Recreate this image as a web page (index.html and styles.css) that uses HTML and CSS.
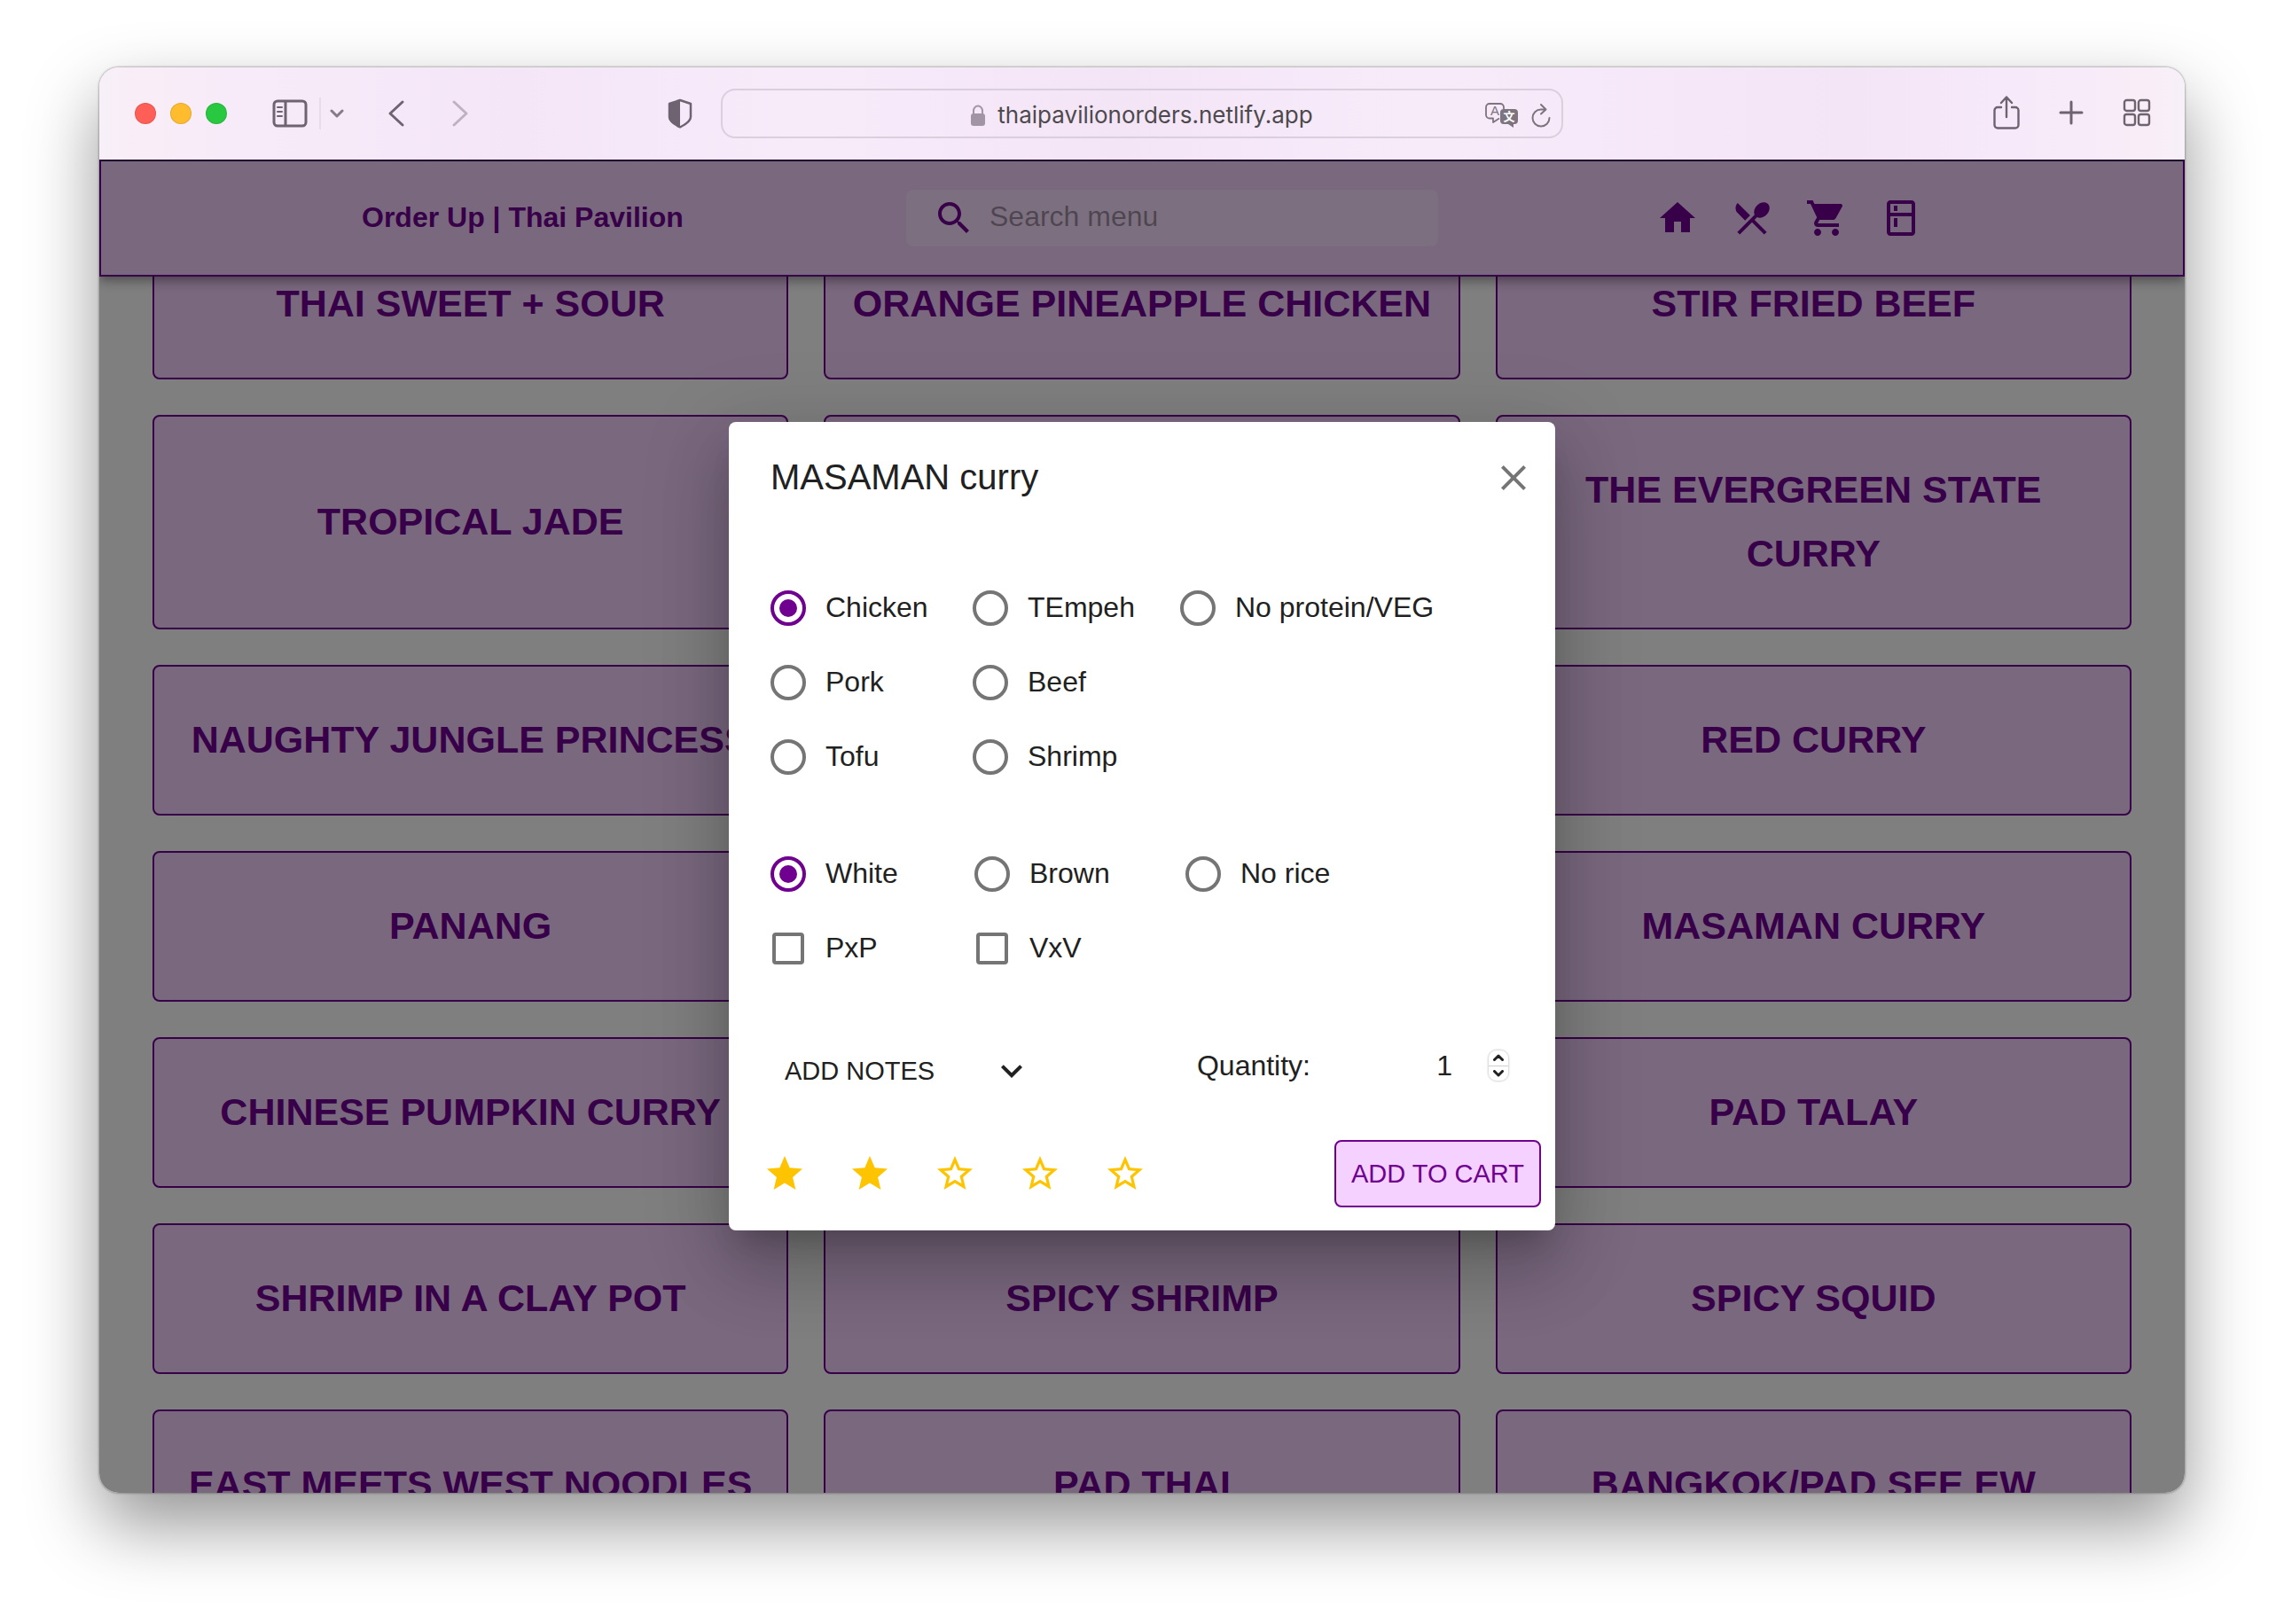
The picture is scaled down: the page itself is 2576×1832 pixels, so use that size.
FILE: index.html
```html
<!DOCTYPE html>
<html lang="en">
<head>
<meta charset="utf-8">
<meta name="viewport" content="width=device-width, initial-scale=1">
<title>Order Up | Thai Pavilion</title>
<link rel="stylesheet" href="styles.css">
</head>
<body>
<div class="window">
  <div class="toolbar">
    <div class="toolbar-left">
      <div class="lights"><span class="light light-red"></span><span class="light light-yellow"></span><span class="light light-green"></span></div>
      <button class="tool sidebar-tool" aria-label="Sidebar">
        <svg width="40" height="32" viewBox="0 0 40 32" fill="none" stroke="currentColor" stroke-width="3"><rect x="2" y="2" width="36" height="28" rx="4"/><path d="M15 2v28"/><path stroke-width="2" stroke-linecap="round" d="M6 9h5M6 14h5M6 19h5"/></svg>
      </button>
      <span class="divider"></span>
      <button class="tool tabs-tool" aria-label="Tab groups">
        <svg width="16" height="12" viewBox="0 0 16 12" fill="none" stroke="#857a88" stroke-width="3" stroke-linecap="round" stroke-linejoin="round"><path d="M2 3l6 6 6-6"/></svg>
      </button>
      <button class="tool back-tool" aria-label="Back">
        <svg width="20" height="32" viewBox="0 0 20 32" fill="none" stroke="currentColor" stroke-width="3" stroke-linecap="round" stroke-linejoin="round"><path d="M17 3L3 16l14 13"/></svg>
      </button>
      <button class="tool forward-tool" aria-label="Forward">
        <svg width="20" height="32" viewBox="0 0 20 32" fill="none" stroke="currentColor" stroke-width="3" stroke-linecap="round" stroke-linejoin="round"><path d="M3 3l14 13L3 29"/></svg>
      </button>
      <button class="tool shield-tool" aria-label="Privacy report">
        <svg width="28" height="34" viewBox="0 0 28 34"><path d="M14 2L26 6v15c0 5-7 9-12 11.500C9 30 2 26 2 21V6z" fill="none" stroke="currentColor" stroke-width="2.500" stroke-linejoin="round"/><path d="M14 1v32C9 30 1 26 1 21V6z" fill="currentColor"/></svg>
      </button>
    </div>
    <div class="address">
      <div class="address-site">
        <svg width="16" height="24" viewBox="0 0 16 24"><rect y="10" width="16" height="14" rx="3" fill="#a294a5"/><path d="M3 11V7a5 5.500 0 0 1 10 0v4" fill="none" stroke="#a294a5" stroke-width="2"/></svg>
        <span>thaipavilionorders.netlify.app</span>
      </div>
      <div class="address-tools">
        <button class="tool" aria-label="Translate">
          <svg width="38" height="28" viewBox="0 0 38 28"><path d="M16 17.500L9 22v-4.500H5a4 4 0 0 1-4-4V5a4 4 0 0 1 4-4h12a4 4 0 0 1 4 4v2" fill="none" stroke="#7d747f" stroke-width="1.800" stroke-linejoin="round"/><text x="11" y="14" text-anchor="middle" class="glyph-latin">A</text><path d="M21 7h12a4 4 0 0 1 4 4v9a4 4 0 0 1-4 4h-1v4l-6-4h-5a4 4 0 0 1-4-4v-9a4 4 0 0 1 4-4z" fill="#7d747f"/><text x="27" y="20" text-anchor="middle" class="glyph-han">文</text></svg>
        </button>
        <button class="tool" aria-label="Reload">
          <svg width="22" height="28" viewBox="0 0 22 28" fill="none" stroke="#7d747f" stroke-width="2" stroke-linecap="round" stroke-linejoin="round"><path d="M16 7.500H11A9.500 9.500 0 1 0 20.500 17M11 2l5.500 5.500L11 12.500"/></svg>
        </button>
      </div>
    </div>
    <div class="toolbar-right">
      <button class="tool share-tool" aria-label="Share">
        <svg width="30" height="38" viewBox="0 0 30 38" fill="none" stroke="currentColor" stroke-width="2.400" stroke-linecap="round" stroke-linejoin="round"><path d="M9 13H5a3.500 3.500 0 0 0-3.500 3.500v16.500A3.500 3.500 0 0 0 5 36.500h20a3.500 3.500 0 0 0 3.500-3.500V16.500A3.500 3.500 0 0 0 25 13h-4M15 24V2M9 8l6-6.500L21 8"/></svg>
      </button>
      <button class="tool" aria-label="New tab">
        <svg width="28" height="28" viewBox="0 0 28 28" stroke="currentColor" stroke-width="3" stroke-linecap="round"><path d="M14 2v24M2 14h24"/></svg>
      </button>
      <button class="tool" aria-label="Tab overview">
        <svg width="32" height="32" viewBox="0 0 32 32" fill="none" stroke="currentColor" stroke-width="2.400"><rect x="2" y="2" width="12" height="12" rx="2.500"/><rect x="18" y="2" width="12" height="12" rx="2.500"/><rect x="2" y="18" width="12" height="12" rx="2.500"/><rect x="18" y="18" width="12" height="12" rx="2.500"/></svg>
      </button>
    </div>
  </div>

  <div class="page">
    <header class="app-bar">
      <h1 class="brand">Order Up | Thai Pavilion</h1>
      <label class="search">
        <svg class="icon" viewBox="0 0 24 24"><path d="M15.500 14h-.79l-.28-.27C15.410 12.590 16 11.110 16 9.500 16 5.910 13.090 3 9.500 3S3 5.910 3 9.500 5.910 16 9.500 16c1.610 0 3.090-.59 4.230-1.570l.27.28v.79l5 4.990L20.490 19l-4.990-5zm-6 0C7.010 14 5 11.990 5 9.500S7.010 5 9.500 5 14 7.010 14 9.500 11.990 14 9.500 14z"/></svg>
        <input class="search-input" type="text" placeholder="Search menu" aria-label="Search menu">
      </label>
      <nav class="nav">
        <a href="#home" aria-label="Home"><svg class="icon" viewBox="0 0 24 24"><path d="M10 20v-6h4v6h5v-8h3L12 3 2 12h3v8z"/></svg></a>
        <a href="#menu" aria-label="Menu"><svg class="icon" viewBox="0 0 24 24"><path d="M8.100 13.340l2.830-2.830L3.910 3.500c-1.560 1.560-1.560 4.090 0 5.660l4.190 4.180zm6.780-1.810c1.530.71 3.680.21 5.270-1.380 1.910-1.910 2.280-4.650.81-6.120-1.460-1.460-4.200-1.100-6.120.81-1.590 1.590-2.090 3.740-1.380 5.270L3.700 19.870l1.410 1.410L12 14.410l6.880 6.880 1.410-1.410L13.410 13l1.470-1.470z"/></svg></a>
        <a href="#cart" aria-label="Cart"><svg class="icon" viewBox="0 0 24 24"><path d="M7 18c-1.100 0-1.990.9-1.990 2S5.900 22 7 22s2-.9 2-2-.9-2-2-2zM1 2v2h2l3.600 7.590-1.350 2.450c-.16.28-.25.61-.25.96 0 1.100.9 2 2 2h12v-2H7.420c-.14 0-.25-.11-.25-.25l.03-.12.9-1.630h7.450c.75 0 1.410-.41 1.750-1.030l3.580-6.490c.08-.14.12-.31.12-.48 0-.55-.45-1-1-1H5.210l-.94-2H1zm16 16c-1.100 0-1.990.9-1.990 2s.89 2 1.990 2 2-.9 2-2-.9-2-2-2z"/></svg></a>
        <a href="#kitchen" aria-label="Kitchen"><svg class="icon" viewBox="0 0 24 24"><path d="M18 2.010L6 2c-1.100 0-2 .89-2 2v16c0 1.100.9 2 2 2h12c1.100 0 2-.9 2-2V4c0-1.100-.9-1.990-2-1.990zM18 20H6v-9.020h12V20zm0-11H6V4h12v5zM8 5h2v3H8V5zm0 7h2v5H8v-5z"/></svg></a>
      </nav>
    </header>

    <main class="menu-grid">
      <button class="dish">THAI SWEET + SOUR</button>
      <button class="dish">ORANGE PINEAPPLE CHICKEN</button>
      <button class="dish">STIR FRIED BEEF</button>
      <button class="dish">TROPICAL JADE</button>
      <div class="dish"></div>
      <button class="dish">THE EVERGREEN STATE CURRY</button>
      <button class="dish">NAUGHTY JUNGLE PRINCESS</button>
      <div class="dish"></div>
      <button class="dish">RED CURRY</button>
      <button class="dish">PANANG</button>
      <div class="dish"></div>
      <button class="dish">MASAMAN CURRY</button>
      <button class="dish">CHINESE PUMPKIN CURRY</button>
      <div class="dish"></div>
      <button class="dish">PAD TALAY</button>
      <button class="dish">SHRIMP IN A CLAY POT</button>
      <button class="dish">SPICY SHRIMP</button>
      <button class="dish">SPICY SQUID</button>
      <button class="dish">EAST MEETS WEST NOODLES</button>
      <button class="dish">PAD THAI</button>
      <button class="dish">BANGKOK/PAD SEE EW</button>
    </main>

    <div class="backdrop">
      <form class="dialog" role="dialog" aria-labelledby="dialog-title">
        <div class="dialog-head">
          <h2 class="dialog-title" id="dialog-title">MASAMAN curry</h2>
          <button class="tool close" type="button" aria-label="Close"><svg class="icon" viewBox="0 0 24 24"><path d="M19 6.410L17.590 5 12 10.590 6.410 5 5 6.410 10.590 12 5 17.590 6.410 19 12 13.410 17.590 19 19 17.590 13.410 12z"/></svg></button>
        </div>

        <div class="options">
          <div class="choices protein">
            <label class="choice"><input class="radio" type="radio" name="protein" checked><span>Chicken</span></label>
            <label class="choice"><input class="radio" type="radio" name="protein"><span>TEmpeh</span></label>
            <label class="choice"><input class="radio" type="radio" name="protein"><span>No protein/VEG</span></label>
            <label class="choice first"><input class="radio" type="radio" name="protein"><span>Pork</span></label>
            <label class="choice"><input class="radio" type="radio" name="protein"><span>Beef</span></label>
            <label class="choice first"><input class="radio" type="radio" name="protein"><span>Tofu</span></label>
            <label class="choice"><input class="radio" type="radio" name="protein"><span>Shrimp</span></label>
          </div>
          <div class="choices rice">
            <label class="choice"><input class="radio" type="radio" name="rice" checked><span>White</span></label>
            <label class="choice"><input class="radio" type="radio" name="rice"><span>Brown</span></label>
            <label class="choice"><input class="radio" type="radio" name="rice"><span>No rice</span></label>
            <label class="choice first"><input class="check" type="checkbox" name="pxp"><span>PxP</span></label>
            <label class="choice"><input class="check" type="checkbox" name="vxv"><span>VxV</span></label>
          </div>
        </div>

        <div class="extras">
          <button class="notes" type="button">ADD NOTES<svg class="icon" viewBox="0 0 24 24"><path d="M16.590 8.590L12 13.170 7.410 8.590 6 10l6 6 6-6z"/></svg></button>
          <div class="quantity">
            <label for="quantity">Quantity:</label>
            <input class="quantity-input" id="quantity" type="number" value="1" min="1">
            <span class="stepper">
              <button type="button" aria-label="Increase"><svg width="12" height="8" viewBox="0 0 12 8"><path d="M1.500 6.500L6 2l4.500 4.500"/></svg></button>
              <button type="button" aria-label="Decrease"><svg width="12" height="8" viewBox="0 0 12 8"><path d="M1.500 1.500L6 6l4.500-4.500"/></svg></button>
            </span>
          </div>
        </div>

        <div class="dialog-foot">
          <div class="stars">
            <button class="tool" type="button" aria-label="1 star"><svg class="icon" viewBox="0 0 24 24"><path d="M12 17.270L18.180 21l-1.640-7.030L22 9.240l-7.190-.61L12 2 9.190 8.630 2 9.240l5.460 4.730L5.820 21z"/></svg></button>
            <button class="tool" type="button" aria-label="2 stars"><svg class="icon" viewBox="0 0 24 24"><path d="M12 17.270L18.180 21l-1.640-7.030L22 9.240l-7.190-.61L12 2 9.190 8.630 2 9.240l5.460 4.730L5.820 21z"/></svg></button>
            <button class="tool" type="button" aria-label="3 stars"><svg class="icon" viewBox="0 0 24 24"><path d="M22 9.240l-7.190-.62L12 2 9.190 8.630 2 9.240l5.460 4.730L5.820 21 12 17.270 18.180 21l-1.630-7.030L22 9.240zM12 15.400l-3.760 2.270 1-4.280-3.320-2.880 4.380-.38L12 6.100l1.710 4.040 4.380.38-3.320 2.880 1 4.280L12 15.400z"/></svg></button>
            <button class="tool" type="button" aria-label="4 stars"><svg class="icon" viewBox="0 0 24 24"><path d="M22 9.240l-7.190-.62L12 2 9.190 8.630 2 9.240l5.460 4.730L5.820 21 12 17.270 18.180 21l-1.630-7.030L22 9.240zM12 15.400l-3.760 2.270 1-4.280-3.320-2.880 4.380-.38L12 6.100l1.710 4.040 4.380.38-3.320 2.880 1 4.280L12 15.400z"/></svg></button>
            <button class="tool" type="button" aria-label="5 stars"><svg class="icon" viewBox="0 0 24 24"><path d="M22 9.240l-7.190-.62L12 2 9.190 8.630 2 9.240l5.460 4.730L5.820 21 12 17.270 18.180 21l-1.630-7.030L22 9.240zM12 15.400l-3.760 2.270 1-4.280-3.320-2.880 4.380-.38L12 6.100l1.710 4.040 4.380.38-3.320 2.880 1 4.280L12 15.400z"/></svg></button>
          </div>
          <button class="add" type="submit">ADD TO CART</button>
        </div>
      </form>
    </div>
  </div>
</div>
</body>
</html>
```
FILE: styles.css
```css
:root {
  --purple: #700090;
  --lilac: #f5d1ff;
  --ink: #212121;
  --muted: #757575;
  --chrome-icon: #6e6371;
}

* {
  box-sizing: border-box;
}

body {
  display: flex;
  height: 100vh;
  margin: 0;
  padding: 76px 112px 148px;
  background: #fff;
  color: var(--ink);
  font-family: "Liberation Sans", Arial, sans-serif;
  font-size: 32px;
  line-height: 48px;
  overflow: hidden;
}

button,
input {
  font: inherit;
  color: inherit;
}

h1,
h2 {
  margin: 0;
}

svg {
  display: block;
}

/* Browser window */

.window {
  display: flex;
  flex: 1;
  flex-direction: column;
  min-width: 0;
  border-radius: 22px;
  box-shadow: 0 0 2px 1px rgba(0, 0, 0, 0.25), 0 36px 80px rgba(0, 0, 0, 0.42);
  overflow: hidden;
}

.toolbar {
  display: grid;
  grid-template-columns: minmax(0, 701fr) minmax(0, 950fr) minmax(0, 701fr);
  flex: none;
  align-items: center;
  height: 104px;
  background: linear-gradient(90deg, #f7f0f8 0, #f9edf7 2%, #f7ebf9 6%, #f4e6f7 20%, #f7ebfa 34%, #f4e5f6 49%, #f7ebfa 63%, #f4e5f6 84%, #f7ebfa 95%, #f9edf7 98%, #f7f0f8 100%);
  color: var(--chrome-icon);
}

.tool {
  flex: none;
  padding: 0;
  border: 0;
  background: none;
}

.toolbar-left {
  display: flex;
  align-items: center;
  padding: 0 32px 0 40px;
}

.lights {
  display: flex;
  gap: 16px;
  margin-right: 51px;
}

.light {
  width: 24px;
  height: 24px;
  border: 1px solid rgba(0, 0, 0, 0.1);
  border-radius: 50%;
}

.light-red {
  background: #ff5f57;
}

.light-yellow {
  background: #febc2e;
}

.light-green {
  background: #28c840;
}

.divider {
  width: 2px;
  height: 36px;
  margin: 0 10px 0 13px;
  background: #e8dceb;
}

.back-tool {
  margin-left: 49px;
}

.forward-tool {
  margin-left: 52px;
  color: #bfb1c2;
}

.shield-tool {
  margin-left: auto;
}

.address {
  display: grid;
  grid-template-columns: 1fr auto 1fr;
  align-items: center;
  height: 56px;
  padding: 3px 12px 0;
  border: 2px solid #dacfdd;
  border-radius: 16px;
}

.address-site {
  display: flex;
  grid-column: 2;
  align-items: center;
  gap: 14px;
  color: #4c4a4d;
  font-family: Inter, sans-serif;
  font-size: 26px;
}

.address-tools {
  display: flex;
  align-items: center;
  justify-content: flex-end;
  gap: 14px;
}

.glyph-latin {
  fill: #7d747f;
  font: 15px "Liberation Sans", sans-serif;
}

.glyph-han {
  fill: #fff;
  font: bold 13px "Noto Sans CJK SC", sans-serif;
}

.toolbar-right {
  display: flex;
  align-items: center;
  justify-content: flex-end;
  gap: 44px;
  padding: 0 38px 2px 0;
}

/* Page */

.page {
  position: relative;
  flex: 1;
  min-height: 0;
  background: #fff;
  overflow: hidden;
}

.app-bar {
  position: absolute;
  inset: 0 0 auto;
  display: flex;
  align-items: center;
  justify-content: space-between;
  height: 132px;
  padding: 0 12.5%;
  border: 2px solid var(--purple);
  border-top-color: #3c0058;
  background: var(--lilac);
  box-shadow: 0 4px 8px -2px rgba(0, 0, 0, 0.2), 0 8px 10px rgba(0, 0, 0, 0.14), 0 2px 20px rgba(0, 0, 0, 0.12);
  color: var(--purple);
}

.icon {
  flex: none;
  width: 48px;
  height: 48px;
  fill: currentColor;
}

.brand {
  flex: 0 0 368px;
  padding-bottom: 2px;
  font-size: 32px;
  white-space: nowrap;
}

.search {
  display: flex;
  flex: 0 1 600px;
  align-items: center;
  gap: 16px;
  height: 64px;
  padding: 0 30px;
  border-radius: 8px;
  background: rgba(255, 255, 255, 0.3);
}

.search-input {
  flex: 1;
  min-width: 0;
  padding: 0 0 4px;
  border: 0;
  background: none;
}

.search-input::placeholder {
  color: rgba(0, 0, 0, 0.38);
  opacity: 1;
}

.nav {
  display: flex;
  gap: 36px;
}

.nav a {
  color: inherit;
}

.menu-grid {
  display: grid;
  grid-template-columns: repeat(3, minmax(0, 1fr));
  grid-auto-rows: minmax(170px, auto);
  gap: 40px;
  padding: 78px 60px 0;
}

.dish {
  padding: 0 24px 3px;
  border: 2px solid var(--purple);
  border-radius: 8px;
  background: var(--lilac);
  color: var(--purple);
  font-size: 43px;
  font-weight: bold;
  line-height: 72px;
}

.menu-grid > .dish:nth-child(n + 4):nth-child(-n + 6) {
  min-height: 242px;
}

/* Dialog */

.backdrop {
  position: absolute;
  inset: 0;
  display: flex;
  align-items: center;
  justify-content: center;
  background: rgba(0, 0, 0, 0.5);
}

.dialog {
  display: flex;
  flex-direction: column;
  width: 932px;
  border-radius: 8px;
  background: #fff;
  box-shadow: 0 22px 30px -14px rgba(0, 0, 0, 0.2), 0 48px 76px 6px rgba(0, 0, 0, 0.14), 0 18px 92px 16px rgba(0, 0, 0, 0.12);
}

.dialog-head {
  display: flex;
  align-items: center;
  justify-content: space-between;
  height: 126px;
  padding: 0 23px 0 47px;
}

.dialog-title {
  padding-bottom: 2px;
  font-size: 40px;
  font-weight: normal;
}

.close {
  color: var(--muted);
}

.options {
  display: flex;
  flex-direction: column;
  gap: 48px;
  padding: 42px 47px 50px;
}

.choices {
  display: grid;
  grid-auto-rows: 84px;
}

.protein {
  grid-template-columns: 228px 234px 1fr;
}

.rice {
  grid-template-columns: 230px 238px 1fr;
}

.choice {
  display: flex;
  align-items: center;
  gap: 22px;
}

.choice span {
  padding-bottom: 2px;
}

.first {
  grid-column: 1;
}

.radio,
.check {
  flex: none;
  width: 40px;
  height: 40px;
  margin: 0;
  border: 4px solid var(--muted);
  appearance: none;
}

.radio {
  border-radius: 50%;
}

.radio:checked {
  padding: 6px;
  border-color: var(--purple);
  background: var(--purple) content-box;
}

.check {
  width: 36px;
  height: 36px;
  margin: 0 2px;
  border-radius: 4px;
}

.extras {
  display: flex;
  align-items: flex-start;
  justify-content: space-between;
  padding: 0 52px 0 63px;
}

.notes {
  display: flex;
  align-items: center;
  justify-content: space-between;
  width: 280px;
  height: 92px;
  padding: 0;
  border: 0;
  background: none;
  font-size: 29px;
}

.quantity {
  display: flex;
  align-items: center;
  height: 80px;
}

.quantity-input {
  width: 160px;
  padding: 0;
  border: 0;
  background: none;
  text-align: right;
  appearance: textfield;
}

.quantity-input::-webkit-inner-spin-button {
  display: none;
}

.stepper {
  display: flex;
  flex-direction: column;
  width: 24px;
  height: 36px;
  margin-left: 40px;
  border: 1px solid #e0e0e0;
  border-radius: 10px;
  box-shadow: 0 0 2px rgba(0, 0, 0, 0.2);
}

.stepper button {
  display: flex;
  flex: 1;
  align-items: center;
  justify-content: center;
  padding: 0;
  border: 0;
  background: none;
}

.stepper button + button {
  border-top: 1px solid #cfcfcf;
}

.stepper path {
  fill: none;
  stroke: var(--ink);
  stroke-width: 3;
  stroke-linecap: round;
  stroke-linejoin: round;
}

.dialog-foot {
  display: flex;
  align-items: center;
  justify-content: space-between;
  padding: 32px 16px 26px 39px;
}

.stars {
  display: flex;
  gap: 48px;
  color: #ffc400;
}

.add {
  height: 76px;
  padding: 0 17px;
  border: 2px solid var(--purple);
  border-radius: 8px;
  background: var(--lilac);
  color: var(--purple);
  font-size: 29px;
}
```
